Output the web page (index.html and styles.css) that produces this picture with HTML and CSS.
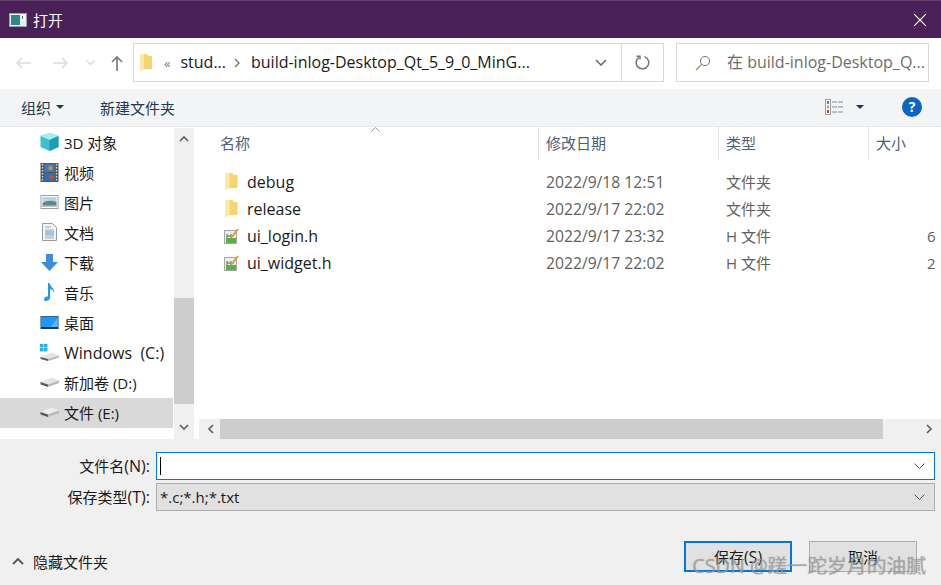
FILE: index.html
```html
<!DOCTYPE html>
<html lang="zh">
<head>
    <meta charset="utf-8"/>
    <title>打开</title>
    <link rel="stylesheet" href="styles.css">
</head>
<body>
<div class="dialog">
    <div class="titleBar">
        <svg class="appIcon" width="18" height="14" viewBox="0 0 18 14">
            <rect x="0.5" y="0.5" width="17" height="13" fill="#e8eeee" stroke="#9aa4a8"/>
            <rect x="2" y="2" width="9" height="10" fill="#2f8a86"/>
            <rect x="12" y="2" width="4" height="6" fill="#ffffff"/>
            <rect x="13" y="3" width="1" height="3" fill="#4a6a78"/>
        </svg>
        <span class="titleText">打开</span>
        <svg class="closeIcon" width="12" height="12" viewBox="0 0 12 12">
            <path d="M0 0L12 12M12 0L0 12" stroke="#ffffff" stroke-width="1.1" fill="none"/>
        </svg>
    </div>

    <div class="navBar">
        <svg class="navIcon" width="16" height="12" viewBox="0 0 16 12"><path d="M16 6H2M7 1L2 6L7 11" stroke="#dcdcdc" stroke-width="1.6" fill="none"/></svg>
        <svg class="navIcon forward" width="16" height="12" viewBox="0 0 16 12"><path d="M0 6H14M9 1L14 6L9 11" stroke="#dcdcdc" stroke-width="1.6" fill="none"/></svg>
        <svg class="navIcon recent" width="9" height="6" viewBox="0 0 9 6"><path d="M0.5 0.5L4.5 4.5L8.5 0.5" stroke="#dcdcdc" stroke-width="1.4" fill="none"/></svg>
        <svg class="navIcon up" width="12" height="16" viewBox="0 0 12 16"><path d="M6 16V2M1 7L6 2L11 7" stroke="#7d7d7d" stroke-width="1.7" fill="none"/></svg>
        <div class="pathBox">
            <svg class="pathFolder" width="12" height="17" viewBox="0 0 12 17">
                <path d="M0 0H7L8 2H12V15H4L0 17Z" fill="#f6d46f"/>
                <path d="M0 0H4V15L0 17Z" fill="#fbe9a9"/>
            </svg>
            <span class="pathMore">«</span>
            <span class="pathPart">stud...</span>
            <svg class="pathSep" width="6" height="10" viewBox="0 0 6 10"><path d="M1 1L5 5L1 9" stroke="#777777" stroke-width="1.4" fill="none"/></svg>
            <span class="pathPart pathLast">build-inlog-Desktop_Qt_5_9_0_MinG...</span>
            <svg class="pathDrop" width="12" height="7" viewBox="0 0 12 7"><path d="M1 1L6 6L11 1" stroke="#666666" stroke-width="1.5" fill="none"/></svg>
            <div class="refresh">
                <svg width="15" height="15" viewBox="0 0 15 15"><path d="M9.5 1.6A6.3 6.3 0 1 1 3.8 2.4M1.5 1.2H5V4.6" stroke="#777777" stroke-width="1.5" fill="none"/></svg>
            </div>
        </div>
        <div class="searchBox">
            <svg width="16" height="16" viewBox="0 0 16 16"><circle cx="10" cy="6" r="4.6" stroke="#777777" fill="none"/><path d="M6.6 9.4L1 15" stroke="#b08a5a" stroke-width="1.3"/></svg>
            <span class="searchText">在 build-inlog-Desktop_Q...</span>
        </div>
    </div>

    <div class="toolBar">
        <span class="toolItem">组织</span>
        <span class="caret"></span>
        <span class="toolItem newFolder">新建文件夹</span>
        <svg class="viewIcon" width="18" height="16" viewBox="0 0 18 16">
            <rect x="0.5" y="0.5" width="5" height="15" fill="#ffffff" stroke="#9a9a9a"/>
            <rect x="2" y="2" width="2" height="3" fill="#4a7fc0"/>
            <rect x="2" y="6.5" width="2" height="3" fill="#c0a040"/>
            <rect x="2" y="11" width="2" height="3" fill="#c04030"/>
            <path d="M7 3H18M7 8H18M7 13H18" stroke="#8a8a8a" stroke-dasharray="5 1"/>
        </svg>
        <span class="caret viewCaret"></span>
        <span class="helpIcon">?</span>
    </div>

    <div class="mainArea">
        <div class="sideArea">
            <ul class="sideList">
                <li><svg width="18" height="18" viewBox="0 0 18 18"><path d="M9 0L18 3V14L9 18L0 14V3Z" fill="#3cc0d0"/><path d="M9 0L18 3L9 7L0 3Z" fill="#a4eef0"/><path d="M9 7L18 3V14L9 18Z" fill="#1f9cb4"/></svg>3D 对象</li>
                <li><svg width="18" height="19" viewBox="0 0 18 19"><rect width="18" height="19" fill="#555555"/><rect x="4" y="1" width="10" height="8" fill="#3a78c8"/><rect x="4" y="10" width="10" height="8" fill="#2f6cc0"/><rect x="8" y="3" width="4" height="4" fill="#c89030"/><rect x="9" y="12" width="4" height="4" fill="#c05030"/><path d="M2 1V18M16 1V18" stroke="#dddddd" stroke-width="1.4" stroke-dasharray="1.5 1.5"/></svg>视频</li>
                <li><svg width="18" height="14" viewBox="0 0 18 14"><rect x="0.5" y="0.5" width="17" height="13" fill="#ffffff" stroke="#a0a0a0"/><rect x="2" y="2" width="14" height="6" fill="#b4d4ee"/><path d="M2 8Q8 4 16 7V12H2Z" fill="#5d8a88"/><path d="M2 10.500H16V12H2Z" fill="#b8c8c0"/></svg>图片</li>
                <li><svg width="15" height="18" viewBox="0 0 15 18"><path d="M0.5 0.5H10.5L14.5 4.5V17.5H0.5Z" fill="#f4f4f4" stroke="#9a9a9a"/><path d="M3 4H9M3 7H12M3 13H12M3 15H12" stroke="#a8a8a8"/><path d="M3 9H12M3 11H12" stroke="#3a98e0"/></svg>文档</li>
                <li><svg width="17" height="17" viewBox="0 0 17 17"><path d="M5 0H12V8H17L8.5 17L0 8H5Z" fill="#3a8ee0"/></svg>下载</li>
                <li><svg width="12" height="18" viewBox="0 0 12 18"><path d="M4.5 0H6C6.5 4 11.5 5 10.5 10C10 7 8 6.500 6.500 6V14.500C6.500 17 4 18 2 18C0 18 0 15.500 2 14C3 13.500 4 13.500 4.500 13.800Z" fill="#1e9be8"/></svg>音乐</li>
                <li><svg width="18" height="13" viewBox="0 0 18 13"><rect width="18" height="13" fill="#1e3a5a"/><rect x="0.500" y="0.500" width="17" height="10.500" fill="#1e98f0"/><path d="M10 11L17 2V11Z" fill="#58b8f8"/></svg>桌面</li>
                <li><svg width="19" height="17" viewBox="0 0 19 17"><rect x="0" y="0" width="3.400" height="3.400" fill="#1eb0ec"/><rect x="4" y="0" width="3.400" height="3.400" fill="#1eb0ec"/><rect x="0" y="4" width="3.400" height="3.400" fill="#1eb0ec"/><rect x="4" y="4" width="3.400" height="3.400" fill="#1eb0ec"/><path d="M0.500 13L12 8.500L19 11.500L8 15Z" fill="#e4e4e4"/><path d="M0.500 13L8 15V17L0.500 15Z" fill="#5a5a5a"/><path d="M8 15L19 11.500V13.500L8 17Z" fill="#b8b8b8"/></svg><span class="latinText windowsText">Windows&nbsp; (C:)</span></li>
                <li><svg width="19" height="10" viewBox="0 0 19 10"><path d="M0.500 5L12 0.500L19 3.500L8 7.500Z" fill="#e4e4e4"/><path d="M0.500 5L8 7.500V10L0.500 7.500Z" fill="#5a5a5a"/><path d="M8 7.500L19 3.500V6L8 10Z" fill="#b8b8b8"/></svg>新加卷 (D:)</li>
                <li class="selected"><svg width="19" height="10" viewBox="0 0 19 10"><path d="M0.500 5L12 0.500L19 3.500L8 7.500Z" fill="#ececec"/><path d="M0.500 5L8 7.500V10L0.500 7.500Z" fill="#5a5a5a"/><path d="M8 7.500L19 3.500V6L8 10Z" fill="#b8b8b8"/></svg>文件 (E:)</li>
            </ul>
            <div class="vScroll">
                <svg class="arrowTop" width="10" height="7" viewBox="0 0 10 7"><path d="M1 6L5 2L9 6" stroke="#606060" stroke-width="1.700" fill="none"/></svg>
                <div class="vThumb"></div>
                <svg class="arrowBottom" width="10" height="7" viewBox="0 0 10 7"><path d="M1 1L5 5L9 1" stroke="#606060" stroke-width="1.700" fill="none"/></svg>
            </div>
        </div>

        <div class="fileArea">
            <div class="headRow">
                <span class="colName">名称</span>
                <span class="colDate">修改日期</span>
                <span class="colType">类型</span>
                <span class="colSize">大小</span>
                <svg class="sortMark" width="9" height="5" viewBox="0 0 9 5"><path d="M0.500 4.500L4.500 0.500L8.500 4.500" stroke="#9a9a9a" fill="none"/></svg>
            </div>
            <div class="fileRows">
                <div class="fileRow">
                    <span class="colName"><svg width="13" height="17" viewBox="0 0 12 17"><path d="M0 0H7L8 2H12V15H4L0 17Z" fill="#f6d46f"/><path d="M0 0H4V15L0 17Z" fill="#fbe9a9"/></svg>debug</span>
                    <span class="colDate">2022/9/18 12:51</span><span class="colType">文件夹</span><span class="colSize"></span>
                </div>
                <div class="fileRow">
                    <span class="colName"><svg width="13" height="17" viewBox="0 0 12 17"><path d="M0 0H7L8 2H12V15H4L0 17Z" fill="#f6d46f"/><path d="M0 0H4V15L0 17Z" fill="#fbe9a9"/></svg>release</span>
                    <span class="colDate">2022/9/17 22:02</span><span class="colType">文件夹</span><span class="colSize"></span>
                </div>
                <div class="fileRow">
                    <span class="colName"><svg width="15" height="16" viewBox="0 0 15 16"><rect x="0.500" y="2.500" width="12" height="13" fill="#e8eee0" stroke="#a8a8a8"/><rect x="2" y="10" width="10" height="5" fill="#5cb048"/><path d="M3 6V10M3 8H7M7 6V10" stroke="#666666"/><path d="M8 9L14 1" stroke="#d8a030" stroke-width="2"/></svg>ui_login.h</span>
                    <span class="colDate">2022/9/17 23:32</span><span class="colType">H 文件</span><span class="colSize sizeNum">6</span>
                </div>
                <div class="fileRow">
                    <span class="colName"><svg width="15" height="16" viewBox="0 0 15 16"><rect x="0.500" y="2.500" width="12" height="13" fill="#e8eee0" stroke="#a8a8a8"/><rect x="2" y="10" width="10" height="5" fill="#5cb048"/><path d="M3 6V10M3 8H7M7 6V10" stroke="#666666"/><path d="M8 9L14 1" stroke="#d8a030" stroke-width="2"/></svg>ui_widget.h</span>
                    <span class="colDate">2022/9/17 22:02</span><span class="colType">H 文件</span><span class="colSize sizeNum">2</span>
                </div>
            </div>
            <div class="hScroll">
                <svg width="7" height="10" viewBox="0 0 7 10"><path d="M6 1L2 5L6 9" stroke="#606060" stroke-width="1.700" fill="none"/></svg>
                <div class="hThumb"></div>
                <svg width="7" height="10" viewBox="0 0 7 10"><path d="M1 1L5 5L1 9" stroke="#606060" stroke-width="1.700" fill="none"/></svg>
            </div>
        </div>
    </div>

    <div class="bottomArea">
        <div class="formRow">
            <label class="formLabel">文件名<span class="latinText">(N):</span></label>
            <div class="comboBox comboActive">
                <span class="caretLine"></span>
                <svg class="comboDrop" width="11" height="6" viewBox="0 0 11 6"><path d="M0.500 0.500L5.500 5.500L10.500 0.500" stroke="#555555" fill="none"/></svg>
            </div>
        </div>
        <div class="formRow">
            <label class="formLabel">保存类型<span class="latinText">(T):</span></label>
            <div class="comboBox comboGray">
                <span>*.c;*.h;*.txt</span>
                <svg class="comboDrop" width="11" height="6" viewBox="0 0 11 6"><path d="M0.500 0.500L5.500 5.500L10.500 0.500" stroke="#555555" fill="none"/></svg>
            </div>
        </div>
        <div class="actionRow">
            <div class="hideGroup">
                <svg width="12" height="8" viewBox="0 0 12 8"><path d="M1 7L6 2L11 7" stroke="#555555" stroke-width="1.800" fill="none"/></svg>
                <span class="hideText">隐藏文件夹</span>
            </div>
            <button class="btn btnMain">保存<span class="latinText">(S)</span></button>
            <button class="btn">取消</button>
        </div>
    </div>

    <div class="watermark">CSDN @蹉一跎岁月的油腻</div>
</div>
</body>
</html>
```

FILE: styles.css
```css
html, body {
    margin: 0;
    padding: 0;
}

.dialog {
    position: relative;
    width: 941px;
    height: 585px;
    overflow: hidden;
    background: #ffffff;
    color: #1a1a1a;
    font-family: "Open Sans", "Noto Sans CJK SC", sans-serif;
    font-size: 15px;
}

.titleBar {
    display: flex;
    align-items: center;
    height: 37px;
    padding-left: 9px;
    padding-right: 15px;
    background: #4a2058;
    border-top: 1px solid #64416f;
    color: #ffffff;
}

.appIcon {
    margin-right: 6px;
}

.titleText {
    flex: 1;
}

.navBar {
    display: flex;
    align-items: center;
    height: 51px;
    padding: 5px 0 7px 15px;
    box-sizing: border-box;
}

.navIcon {
    margin-right: 22px;
}

.navIcon.forward {
    margin-right: 17px;
}

.navIcon.recent {
    margin-right: 16px;
}

.navIcon.up {
    margin-right: 10px;
}

.pathBox {
    display: flex;
    align-items: center;
    width: 531px;
    height: 39px;
    border: 1px solid #d9d9d9;
    box-sizing: border-box;
    font-size: 16px;
}

.pathFolder {
    margin-left: 6px;
}

.pathMore {
    margin-left: 12px;
    color: #777777;
    font-size: 13px;
}

.pathPart {
    margin-left: 10px;
    margin-bottom: 2px;
    white-space: nowrap;
}

.pathSep {
    margin-left: 8px;
}

.pathLast {
    flex: 1;
    margin-left: 11px;
}

.pathDrop {
    margin-right: 14px;
}

.refresh {
    display: flex;
    align-items: center;
    justify-content: center;
    width: 41px;
    height: 37px;
    border-left: 1px solid #d9d9d9;
}

.searchBox {
    display: flex;
    align-items: center;
    width: 253px;
    height: 39px;
    margin-left: 12px;
    padding-left: 18px;
    border: 1px solid #d9d9d9;
    box-sizing: border-box;
    color: #6d6d6d;
    font-size: 16px;
}

.searchText {
    margin-left: 16px;
    margin-bottom: 4px;
    white-space: nowrap;
}

.toolBar {
    display: flex;
    align-items: center;
    height: 38px;
    padding-left: 21px;
    padding-bottom: 1px;
    background: #f3f4f6;
    border-bottom: 1px solid #e6e8eb;
    box-sizing: border-box;
    color: #26384f;
}

.caret {
    width: 0;
    height: 0;
    margin-left: 5px;
    border-left: 4px solid transparent;
    border-right: 4px solid transparent;
    border-top: 4px solid #1f3350;
}

.newFolder {
    margin-left: 36px;
    flex: 1;
}

.viewIcon {
    margin-right: 13px;
}

.viewCaret {
    margin-left: 0;
}

.helpIcon {
    width: 20px;
    height: 20px;
    margin-left: 38px;
    margin-right: 19px;
    border-radius: 50%;
    background: #0a66c0;
    color: #ffffff;
    font-size: 14px;
    font-weight: bold;
    line-height: 20px;
    text-align: center;
}

.mainArea {
    display: flex;
    height: 312px;
}

.sideArea {
    display: flex;
    width: 199px;
    flex: none;
    height: 312px;
    border-top: 1px solid transparent;
    box-sizing: border-box;
}

.sideList {
    width: 173px;
    margin: 0;
    padding: 0;
    list-style: none;
    overflow: hidden;
}

.sideList li {
    display: flex;
    align-items: center;
    height: 30px;
    padding-left: 40px;
    padding-bottom: 2px;
    box-sizing: border-box;
    white-space: nowrap;
}

.sideList li svg {
    flex: none;
    width: 19px;
    margin-right: 5px;
}

.latinText {
    font-size: 16px;
}

.windowsText {
    margin-top: 2px;
}

.sideList .selected {
    background: #d9d9d9;
}

.vScroll {
    display: flex;
    flex-direction: column;
    align-items: center;
    width: 20px;
    margin-left: 1px;
    background: #f0f0f0;
}

.arrowTop {
    margin-top: 7px;
}

.vThumb {
    width: 100%;
    height: 106px;
    margin-top: 156px;
    background: #cdcdcd;
}

.arrowBottom {
    margin-top: 20px;
}

.fileArea {
    display: flex;
    flex-direction: column;
    flex: 1;
    min-width: 0;
}

.headRow {
    position: relative;
    display: flex;
    align-items: center;
    height: 33px;
    padding-bottom: 2px;
    box-sizing: border-box;
    color: #4c607a;
}

.headRow .colDate, .headRow .colType, .headRow .colSize {
    align-self: stretch;
    display: flex;
    align-items: center;
    margin-bottom: -2px;
    padding-bottom: 2px;
    border-left: 1px solid #e5e5e5;
}

.sortMark {
    position: absolute;
    left: 172px;
    top: 0;
}

.colName {
    display: flex;
    align-items: center;
    width: 339px;
    padding-left: 21px;
    box-sizing: border-box;
}

.colDate {
    width: 180px;
    padding-left: 7px;
    box-sizing: border-box;
}

.colType {
    width: 150px;
    padding-left: 7px;
    box-sizing: border-box;
}

.colSize {
    flex: 1;
    padding-left: 7px;
    box-sizing: border-box;
}

.fileRows {
    flex: 1;
    padding-top: 8px;
}

.fileRow {
    display: flex;
    align-items: center;
    height: 27px;
    color: #5f5f5f;
}

.fileRow .colName {
    padding-left: 25px;
    color: #1a1a1a;
    font-size: 16px;
}

.fileRow .colName svg {
    width: 15px;
    margin-right: 8px;
}

.fileRow .colDate, .fileRow .colType, .fileRow .colSize {
    padding-left: 8px;
}

.fileRow .colDate {
    font-size: 15.700px;
}

.sizeNum {
    padding-left: 59px !important;
}

.hScroll {
    display: flex;
    align-items: center;
    height: 20px;
    padding: 0 8px;
    background: #f0f0f0;
}

.hThumb {
    width: 663px;
    height: 20px;
    margin-left: 6px;
    margin-right: 43px;
    background: #cdcdcd;
}

.bottomArea {
    height: 146px;
    padding-top: 13px;
    background: #f0f0f0;
    box-sizing: border-box;
}

.formRow {
    display: flex;
    align-items: center;
    height: 28px;
    margin-bottom: 3px;
}

.formLabel {
    width: 150px;
    margin-right: 6px;
    text-align: right;
}

.comboBox {
    display: flex;
    align-items: center;
    justify-content: space-between;
    width: 779px;
    height: 28px;
    padding-left: 3px;
    padding-right: 9px;
    box-sizing: border-box;
}

.comboActive {
    background: #ffffff;
    border: 1px solid #0078d7;
}

.comboGray {
    background: #e1e1e1;
    border: 1px solid #adadad;
}

.caretLine {
    width: 1px;
    height: 18px;
    background: #000000;
}

.actionRow {
    display: flex;
    align-items: center;
    height: 31px;
    margin-top: 30px;
    padding-left: 12px;
}

.hideGroup {
    display: flex;
    align-items: center;
    flex: 1;
    margin-top: 9px;
}

.hideText {
    margin-left: 9px;
}

.btn {
    width: 108px;
    height: 31px;
    margin-right: 24px;
    padding: 0;
    background: #e1e1e1;
    border: 1px solid #adadad;
    color: #1a1a1a;
    font-family: inherit;
    font-size: 15px;
}

.btnMain {
    margin-right: 17px;
    border: 2px solid #0078d7;
}

/* image watermark over the buttons */
.watermark {
    position: absolute;
    right: 15px;
    bottom: 6px;
    color: rgba(165, 165, 165, 0.75);
    font-size: 19.800px;
    white-space: nowrap;
    text-shadow: 0 0 1px rgba(90, 90, 90, 0.5);
}
```
